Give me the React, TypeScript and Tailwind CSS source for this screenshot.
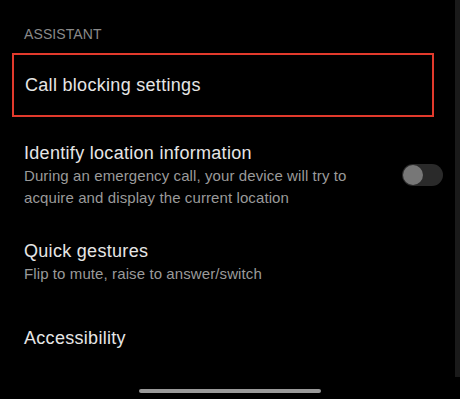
import React from "react";

const Toggle: React.FC = () => (
  <div className="relative w-[41px] h-[22px] rounded-full bg-[#2a2a2a] shrink-0">
    <div className="absolute left-[1px] top-[1px] w-[20px] h-[20px] rounded-full bg-[#777777]" />
  </div>
);

const App: React.FC = () => {
  return (
    <div
      className="w-[460px] h-[399px] bg-black flex overflow-hidden"
      style={{ fontFamily: "'Liberation Sans', Arial, sans-serif" }}
    >
      <div className="flex-1 flex flex-col">
        <div className="pt-6 pl-[24px] text-[14px] leading-[20px] text-[#8a8a8a] tracking-[0.1px]">
          ASSISTANT
        </div>

        <div className="mt-[9px] ml-[12px] w-[422px] h-[64px] border-[2.5px] border-[#e23a2c] flex items-center pl-[11px]">
          <span className="text-[18px] leading-[24px] text-[#e6e6e6] tracking-[0.3px]">
            Call blocking settings
          </span>
        </div>

        <div className="mt-[24px] pl-[24px] pr-[12px] flex items-center justify-between">
          <div className="flex flex-col">
            <span className="text-[18px] leading-[24px] text-[#e6e6e6] tracking-[0.3px]">
              Identify location information
            </span>
            <span className="text-[15px] leading-[22px] text-[#9a9a9a] w-[345px] tracking-[0.1px]">
              During an emergency call, your device will try to acquire and
              display the current location
            </span>
          </div>
          <Toggle />
        </div>

        <div className="mt-[30px] pl-[24px] flex flex-col">
          <span className="text-[18px] leading-[24px] text-[#e6e6e6] tracking-[0.3px]">
            Quick gestures
          </span>
          <span className="text-[15px] leading-[22px] text-[#9a9a9a] tracking-[0.1px]">
            Flip to mute, raise to answer/switch
          </span>
        </div>

        <div className="mt-[41px] pl-[24px] text-[18px] leading-[24px] text-[#e6e6e6] tracking-[0.3px]">
          Accessibility
        </div>

        <div className="mt-[39px] ml-[139px] w-[182px] h-[4px] rounded-full bg-[#9a9a9a]" />
      </div>
      <div className="w-[5px] h-[377px] bg-[#1a1a1a]" />
    </div>
  );
};

export default App;
